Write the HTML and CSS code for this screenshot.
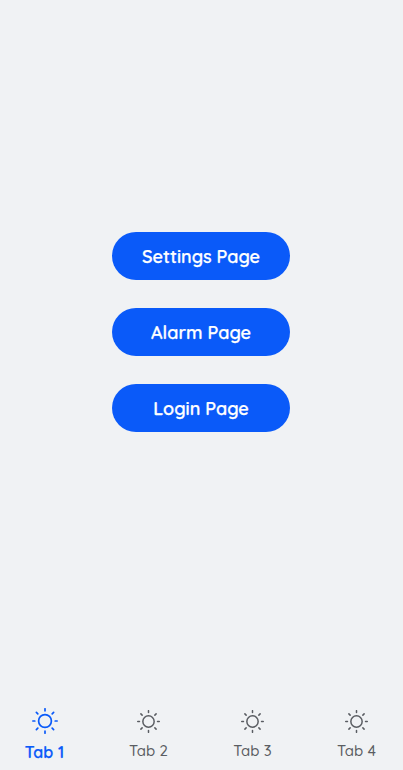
FILE: index.html
```html
<!DOCTYPE html>
<html lang="en">
<head>
<meta charset="utf-8">
<title>Home</title>
<link rel="stylesheet" href="styles.css">
</head>
<body>
<svg class="defs" aria-hidden="true"><symbol id="sun" viewBox="-13 -13 26 26"><circle r="6.4"/><path d="M0-12.2v2M0 10.2v2M-12.2 0h2M10.2 0h2M-8.6-8.6l1.4 1.4M7.2 7.2l1.4 1.4M-8.6 8.6l1.4-1.4M7.2-7.2l1.4-1.4"/></symbol></svg>
<main class="actions">
<button class="button">Settings Page</button>
<button class="button">Alarm Page</button>
<button class="button">Login Page</button>
</main>
<nav class="tabs">
<a class="tab active"><svg class="icon"><use href="#sun"/></svg><span>Tab 1</span></a>
<a class="tab"><svg class="icon"><use href="#sun"/></svg><span>Tab 2</span></a>
<a class="tab"><svg class="icon"><use href="#sun"/></svg><span>Tab 3</span></a>
<a class="tab"><svg class="icon"><use href="#sun"/></svg><span>Tab 4</span></a>
</nav>
</body>
</html>
```
FILE: styles.css
```css
* { box-sizing: border-box; }
body {
  margin: 0;
  height: 770px;
  display: flex;
  flex-direction: column;
  overflow: hidden;
  background: #f0f2f4;
  font-family: Quicksand, Lato, sans-serif;
}
.defs { position: absolute; width: 0; height: 0; }
.actions {
  flex: 1;
  padding: 232px 0 0 112px;
  display: flex;
  flex-direction: column;
  gap: 28px;
}
.button {
  width: 178px;
  height: 48px;
  padding: 1px 0 0;
  border: 0;
  border-radius: 24px;
  background: #0a5af9;
  color: #fff;
  font: 600 18px/24px Quicksand, Lato, sans-serif;
  -webkit-text-stroke: 0.25px currentColor;
  white-space: nowrap;
}
.tabs {
  height: 70px;
  display: grid;
  grid-template-columns: repeat(4, 90px);
  column-gap: 14px;
}
.tab {
  display: flex;
  flex-direction: column;
  align-items: center;
  padding-top: 10px;
  color: #5a5d62;
  font-size: 15px;
  font-weight: 500;
  line-height: 20px;
  letter-spacing: 0.1px;
}
.tab span { margin-right: 1px; }
.icon {
  width: 23px;
  height: 23px;
  margin: 0 1px 8px 0;
  fill: none;
  stroke: currentColor;
  stroke-width: 1.7;
  stroke-linecap: round;
}
.active {
  padding-top: 8px;
  color: #0a5af9;
  font-size: 16px;
  font-weight: 600;
  letter-spacing: 0.15px;
  -webkit-text-stroke: 0.25px currentColor;
}
.active .icon { width: 26px; height: 26px; margin: 0 0 8px; }
```
